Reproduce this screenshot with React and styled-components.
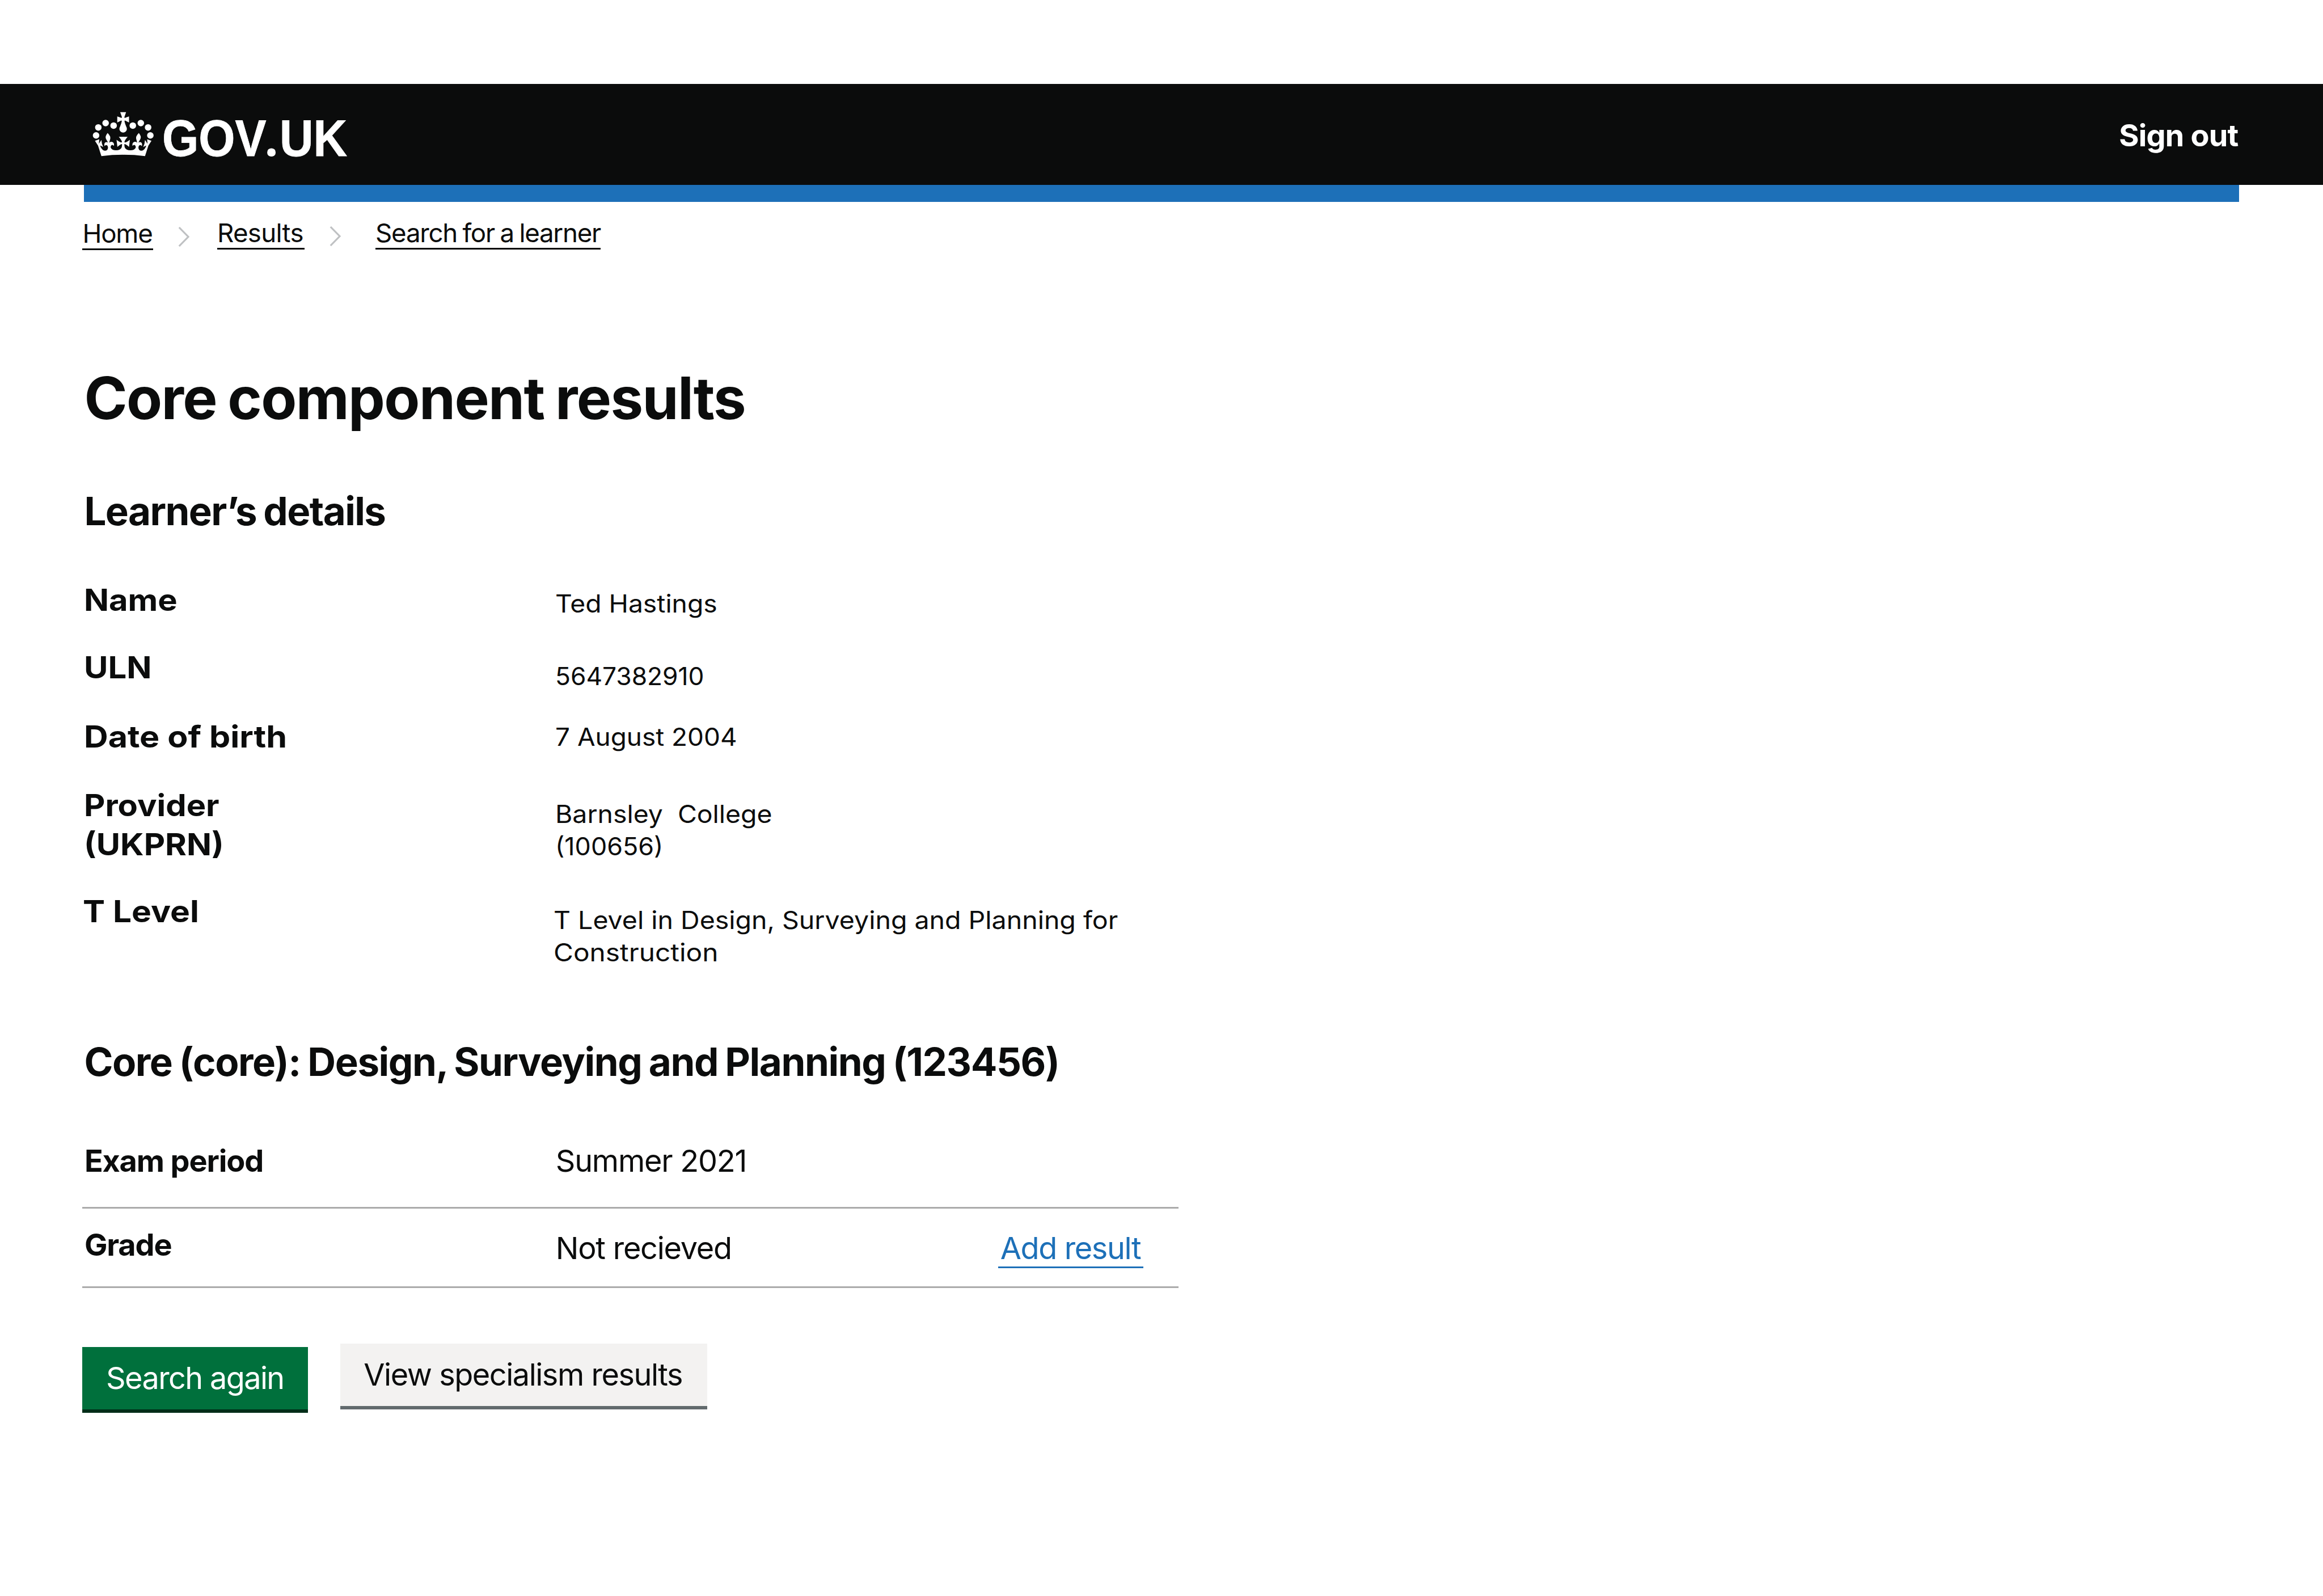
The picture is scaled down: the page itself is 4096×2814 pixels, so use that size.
import React from "react";
import styled, { createGlobalStyle } from "styled-components";

const ink = "#0b0c0c";
const blue = "#1d70b8";

const GlobalStyle = createGlobalStyle`
  *, *::before, *::after { box-sizing: border-box; }
  html, body { margin: 0; background: #fff; }
  body {
    color: ${ink};
    font-family: Inter, "Liberation Sans", sans-serif;
    -webkit-font-smoothing: antialiased;
  }
  h1, h2, dl, dt, dd, ol { margin: 0; padding: 0; font-weight: inherit; }
`;

const Page = styled.div`
  width: 4096px;
  height: 2814px;
  padding-top: 148.4px;
  background: #fff;
  overflow: hidden;
`;

const Header = styled.header`
  display: flex;
  justify-content: space-between;
  align-items: flex-start;
  height: 178.1px;
  padding: 46px 149.5px 0 159.5px;
  background: ${ink};
  color: #fff;
`;

const Brand = styled.a`
  display: flex;
  align-items: flex-start;
  color: inherit;
  text-decoration: none;
`;

const CrownMark = styled.svg`
  display: block;
  width: 115px;
  height: 85.3px;
  fill: currentColor;
`;

const Wordmark = styled.span`
  display: flex;
  align-items: baseline;
  margin: 3px 0 0 11.3px;
  line-height: 90px;
  font-weight: 700;
`;

const Letters = styled.span`
  display: block;
  width: ${(p) => p.$width}px;
  font-family: "Liberation Sans", Arial, sans-serif;
  font-size: 90.9px;
  white-space: nowrap;
  transform: scaleX(0.908);
  transform-origin: left;
  -webkit-text-stroke: 0.8px currentColor;
`;

const Dot = styled.span`
  display: block;
  width: 26.7px;
  font-family: "Noto Sans", sans-serif;
  font-size: 86px;
`;

const SignOut = styled.a`
  margin-top: 10.2px;
  color: inherit;
  font-size: 54px;
  font-weight: 700;
  line-height: 68px;
  letter-spacing: -0.85px;
  text-decoration: none;
`;

const AccentBar = styled.div`
  height: 29.7px;
  margin: 0 148.4px;
  background: ${blue};
`;

const Breadcrumbs = styled.ol`
  display: flex;
  align-items: flex-start;
  height: 120px;
  padding: 27.4px 0 0 145.4px;
  list-style: none;
`;

const Crumb = styled.li`
  display: flex;
  align-items: flex-start;
  margin-top: ${(p) => p.$drop || 0}px;
`;

const CrumbLink = styled.a`
  width: ${(p) => p.$width}px;
  height: 56.2px;
  border-bottom: 3.5px solid ${ink};
  color: ${ink};
  font-size: 45.7px;
  line-height: 54px;
  letter-spacing: ${(p) => p.$track}px;
  word-spacing: -2px;
  white-space: nowrap;
  text-decoration: none;
`;

const Chevron = styled.svg`
  width: 20px;
  height: 35px;
  margin: 15px ${(p) => p.$after + 1}px 0 44px;
  fill: none;
  stroke: #bfc1c3;
  stroke-width: 3.2;
`;

const Main = styled.main`
  display: flex;
  flex-direction: column;
  padding-left: 148.4px;
`;

const Title = styled.h1`
  margin-top: 160.4px;
  font-size: 103px;
  font-weight: 700;
  line-height: 130px;
  letter-spacing: -1.64px;
  word-spacing: -3.5px;
`;

const Subtitle = styled.h2`
  height: 90px;
  margin-top: ${(p) => p.$top}px;
  font-size: 69px;
  font-weight: 700;
  line-height: 90px;
  letter-spacing: ${(p) => p.$track}px;
  word-spacing: -2.5px;
  white-space: nowrap;
`;

const Details = styled.dl`
  display: flex;
  flex-direction: column;
  margin-top: 77.6px;
`;

const DetailRow = styled.div`
  display: grid;
  grid-template-columns: 830.6px 1200px;
  align-items: start;
  height: ${(p) => p.$height}px;
  margin-left: ${(p) => p.$outdent || 0}px;
`;

const DetailLine = styled.span`
  display: block;
  width: max-content;
  transform: scaleX(${(p) => p.$stretch});
  transform-origin: left;
`;

const DetailLabel = styled.dt`
  padding-top: 0.6px;
  font-size: 54px;
  font-weight: 700;
  line-height: 68.3px;
`;

const DetailValue = styled.dd`
  padding-top: ${(p) => p.$drop}px;
  font-size: 43.3px;
  line-height: 56.4px;
  white-space: pre;
`;

const Summary = styled.dl`
  width: 1932.3px;
  margin: 94.8px 0 0 -3px;
`;

const SummaryRow = styled.div`
  display: grid;
  grid-template-columns: 833.6px 781.2px 256px;
  align-items: start;
  height: ${(p) => p.$height}px;
  padding: ${(p) => p.$pad}px 0 0 0;
  border-bottom: 3px solid #ababab;
  font-size: 54px;
  line-height: 68px;
`;

const SummaryKey = styled.dt`
  padding-left: 3.5px;
  font-weight: 700;
  letter-spacing: -1.15px;
`;

const SummaryValue = styled.dd`
  padding-top: ${(p) => p.$drop || 0}px;
  padding-left: 0.8px;
  letter-spacing: -1.25px;
`;

const SummaryAction = styled.dd`
  display: flex;
  padding-top: 6px;
`;

const ActionLink = styled.a`
  width: 256px;
  height: 68.5px;
  padding-left: 3.6px;
  border-bottom: 3px solid ${blue};
  color: ${blue};
  letter-spacing: -1.4px;
  white-space: nowrap;
  text-decoration: none;
`;

const ButtonGroup = styled.div`
  display: flex;
  align-items: flex-start;
  gap: 56.4px;
  margin: 98px 0 0 -3px;
`;

const Button = styled.button`
  display: block;
  width: ${(p) => p.$width}px;
  height: 116px;
  margin: ${(p) => (p.$secondary ? 0 : 6)}px 0 0;
  padding: 0 0 0 ${(p) => (p.$secondary ? 41.5 : 41.7)}px;
  border: 0;
  border-bottom: 6px solid ${(p) => (p.$secondary ? "#626a6d" : "#002d18")};
  background: ${(p) => (p.$secondary ? "#f3f2f1" : "#00703c")};
  color: ${(p) => (p.$secondary ? ink : "#fff")};
  font-family: inherit;
  font-size: 54px;
  line-height: 110px;
  letter-spacing: ${(p) => (p.$secondary ? -1.47 : -1.63)}px;
  text-align: left;
  white-space: nowrap;
`;

const jewels = [
  [38, 181],
  [54, 124],
  [106, 93],
  [163, 111],
];

function CrownHalf() {
  return (
    <>
      {jewels.map(([x, y]) => (
        <circle key={x} cx={x} cy={y} r="23.3" />
      ))}
      <path d="M30 219 61 208 58 241 76 213 80 241 89 264 68 253Q68 262 75 271 86 291 104 290 123 288 123 267 121 250 109 250 103 251 99 258 93 238 104 231 113 226 123 233 120 224 112 212 102 197 109 182 114 172 120 164 131 174 138 188 142 203 136 216 133 226 132 234 138 224 150 227 170 233 165 256 158 246 149 250 139 257 143 270 152 287 180 287 212 287 220 268 224 256 223 243 215 241 190 263L184 212Q214 235 223 230 223 217 200 191H233V319Q150 319 76 329L52 254Z" />
    </>
  );
}

function Crown() {
  return (
    <CrownMark viewBox="0 0 465 345" aria-hidden="true">
      <CrownHalf />
      <g transform="translate(463 0) scale(-1 1)">
        <CrownHalf />
      </g>
      <path d="M210 15H252L240 50Q239 57 245 56L273 45V89L247 76Q239 73 241 82 244 98 253 118A27 27 0 1 1 209 118Q218 98 221 82 223 73 215 76L189 89V45L217 56Q223 57 222 50Z" />
    </CrownMark>
  );
}

function Separator({ after }) {
  return (
    <Chevron viewBox="0 0 20 35" $after={after} aria-hidden="true">
      <path d="M1.8 1 18 17.5 1.8 34" />
    </Chevron>
  );
}

const crumbs = [
  { text: "Home", width: 124.3, track: -1.2, after: 48.2, drop: 1.5 },
  { text: "Results", width: 153.8, track: -0.7, after: 60.4, drop: 0 },
  { text: "Search for a learner", width: 397, track: -1.28, drop: 0 },
];

const details = [
  { label: [["Name", 1.07]], value: [["Ted Hastings", 1.068]], height: 118.6, drop: 12.7 },
  { label: [["ULN", 1.075]], value: [["5647382910", 1.023]], height: 121.8, drop: 21.6 },
  { label: [["Date of birth", 1.0945]], value: [["7 August 2004", 1.06]], height: 121.6, drop: 6.6 },
  {
    label: [["Provider", 1.07], ["(UKPRN)", 1.07]],
    value: [["Barnsley  College", 1.071], ["(100656)", 1.036]],
    height: 187.1,
    drop: 21.6,
  },
  {
    label: [["T Level", 1.085]],
    value: [["T Level in Design, Surveying and Planning for", 1.074], ["Construction", 1.104]],
    height: 140,
    drop: 21.5,
    outdent: -2.6,
  },
];

const renderLines = (lines) =>
  lines.map(([text, stretch]) => (
    <DetailLine key={text} $stretch={stretch}>
      {text}
    </DetailLine>
  ));

export default function App() {
  return (
    <>
      <GlobalStyle />
      <Page>
        <Header>
          <Brand>
            <Crown />
            <Wordmark>
              <Letters $width={180.8}>GOV</Letters>
              <Dot>.</Dot>
              <Letters $width={120}>UK</Letters>
            </Wordmark>
          </Brand>
          <SignOut>Sign out</SignOut>
        </Header>
        <AccentBar />
        <Breadcrumbs>
          {crumbs.map((c) => (
            <Crumb key={c.text} $drop={c.drop}>
              <CrumbLink $width={c.width} $track={c.track}>
                {c.text}
              </CrumbLink>
              {c.after && <Separator after={c.after} />}
            </Crumb>
          ))}
        </Breadcrumbs>
        <Main>
          <Title>Core component results</Title>
          <Subtitle $top={89.5} $track={-1.6}>
            Learner’s details
          </Subtitle>
          <Details>
            {details.map((d) => (
              <DetailRow key={d.label[0][0]} $height={d.height} $outdent={d.outdent}>
                <DetailLabel>{renderLines(d.label)}</DetailLabel>
                <DetailValue $drop={d.drop}>{renderLines(d.value)}</DetailValue>
              </DetailRow>
            ))}
          </Details>
          <Subtitle $top={114.5} $track={-1.45}>
            Core (core): Design, Surveying and Planning (123456)
          </Subtitle>
          <Summary>
            <SummaryRow $height={119} $pad={0.6}>
              <SummaryKey>Exam period</SummaryKey>
              <SummaryValue>Summer 2021</SummaryValue>
            </SummaryRow>
            <SummaryRow $height={139.5} $pad={30}>
              <SummaryKey>Grade</SummaryKey>
              <SummaryValue $drop={6}>Not recieved</SummaryValue>
              <SummaryAction>
                <ActionLink>Add result</ActionLink>
              </SummaryAction>
            </SummaryRow>
          </Summary>
          <ButtonGroup>
            <Button $width={398}>Search again</Button>
            <Button $width={647} $secondary>
              View specialism results
            </Button>
          </ButtonGroup>
        </Main>
      </Page>
    </>
  );
}
